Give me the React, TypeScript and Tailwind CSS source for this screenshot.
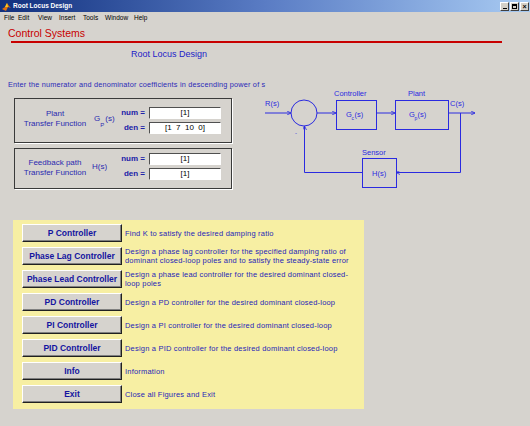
import React from "react";

const buttons: { label: string; desc: string[] }[] = [
  { label: "P Controller", desc: ["Find K to satisfy the desired damping ratio"] },
  {
    label: "Phase Lag Controller",
    desc: [
      "Design a phase lag controller for the specified damping ratio of",
      "dominant closed-loop poles and to satisfy the steady-state error",
    ],
  },
  {
    label: "Phase Lead Controller",
    desc: ["Design a phase lead controller for the desired dominant closed-", "loop poles"],
  },
  { label: "PD Controller", desc: ["Design a PD controller for the desired dominant closed-loop"] },
  { label: "PI Controller", desc: ["Design a PI controller for the desired dominant closed-loop"] },
  { label: "PID Controller", desc: ["Design a PID controller for the desired dominant closed-loop"] },
  { label: "Info", desc: ["Information"] },
  { label: "Exit", desc: ["Close all Figures and Exit"] },
];

const menu = [
  { name: "File", w: "w-[14px]" },
  { name: "Edit", w: "w-[20px]" },
  { name: "View", w: "w-[21px]" },
  { name: "Insert", w: "w-[24px]" },
  { name: "Tools", w: "w-[22px]" },
  { name: "Window", w: "w-[29px]" },
  { name: "Help", w: "w-[20px]" },
];

function CoefRow({ label, value }: { label: string; value: string }) {
  return (
    <div className="flex items-center h-[12px]">
      <span className="w-[27px] text-right text-[8px] font-bold text-[#2020a8] leading-none">{label}</span>
      <div className="ml-[4px] w-[72px] h-[12px] bg-white border border-t-[#505050] border-l-[#505050] border-b-white border-r-white flex items-center justify-center text-[8px] text-black leading-none whitespace-pre">
        {value}
      </div>
    </div>
  );
}

function Diagram() {
  const c = "#2a2ae0";
  return (
    <svg width="240" height="100" viewBox="0 0 240 100" className="ml-[18px] shrink-0">
      <defs>
        <marker id="ar" markerWidth="4" markerHeight="4" refX="4" refY="2" orient="auto">
          <path d="M0,0 L4,2 L0,4" fill="none" stroke={c} strokeWidth="0.8" />
        </marker>
      </defs>
      <g fill="none" stroke={c} strokeWidth="1">
        <line x1="15" y1="24" x2="41" y2="24" markerEnd="url(#ar)" />
        <circle cx="54" cy="24" r="13" />
        <line x1="67" y1="24" x2="86" y2="24" markerEnd="url(#ar)" />
        <rect x="86.5" y="11.5" width="40" height="29" />
        <line x1="126" y1="24" x2="145" y2="24" markerEnd="url(#ar)" />
        <rect x="145.5" y="11.5" width="53" height="29" />
        <line x1="198" y1="24" x2="225" y2="24" markerEnd="url(#ar)" />
        <polyline points="210.5,24 210.5,83.5 146,83.5" markerEnd="url(#ar)" />
        <rect x="112.5" y="69.5" width="34" height="29" />
        <polyline points="112,83.5 54.5,83.5 54.5,37" markerEnd="url(#ar)" />
      </g>
      <g fill={c} fontSize="7.5" fontFamily="'Liberation Sans', Arial, sans-serif">
        <text x="15" y="17">R(s)</text>
        <text x="84" y="7">Controller</text>
        <text x="96" y="28">G</text>
        <text x="101.5" y="31" fontSize="5">c</text>
        <text x="104.5" y="28">(s)</text>
        <text x="158" y="7">Plant</text>
        <text x="159" y="28">G</text>
        <text x="164.5" y="31" fontSize="5">p</text>
        <text x="167.5" y="28">(s)</text>
        <text x="200" y="17">C(s)</text>
        <text x="112" y="66">Sensor</text>
        <text x="122" y="87">H(s)</text>
        <text x="45" y="46" fontSize="6">-</text>
      </g>
    </svg>
  );
}

export default function App() {
  return (
    <div className="w-[530px] h-[426px] overflow-hidden bg-[#d6d3ce] font-['Liberation_Sans',Arial,sans-serif] flex flex-col">
      {/* title bar */}
      <div className="h-[12px] flex items-center bg-gradient-to-r from-[#12307e] via-[#5a7cc4] to-[#a9cbf2] shrink-0">
        <svg width="9" height="9" viewBox="0 0 9 9" className="ml-[2px]">
          <path d="M0,7 L3,5 L5,1 L7,4 L9,6 L6,5 L4,9 Z" fill="#e07010" />
          <path d="M3,5 L5,1 L6,5 Z" fill="#f8d020" />
        </svg>
        <span className="ml-[2px] text-[6.5px] font-bold text-white leading-none">Root Locus Design</span>
        <div className="ml-auto mr-[1px] flex gap-[1px]">
          <div className="w-[9px] h-[9px] bg-[#d4d0c8] border border-t-white border-l-white border-b-[#404040] border-r-[#404040] flex items-end justify-center pb-[1px]">
            <div className="w-[4px] h-[1px] bg-black" />
          </div>
          <div className="w-[9px] h-[9px] bg-[#d4d0c8] border border-t-white border-l-white border-b-[#404040] border-r-[#404040] flex items-center justify-center">
            <div className="w-[5px] h-[5px] border border-black border-t-2" />
          </div>
          <div className="w-[9px] h-[9px] bg-[#d4d0c8] border border-t-white border-l-white border-b-[#404040] border-r-[#404040] flex items-center justify-center text-[7px] font-bold leading-none text-black">
            ×
          </div>
        </div>
      </div>
      {/* menu */}
      <div className="h-[12px] flex items-center pl-[4px] shrink-0">
        {menu.map((m) => (
          <span key={m.name} className={`${m.w} text-[6.5px] text-black leading-none`}>
            {m.name}
          </span>
        ))}
      </div>

      <div className="mt-[3px] ml-[8px] h-[12px] leading-[12px] text-[10.5px] text-[#c80000]">Control Systems</div>
      <div className="mt-[2px] ml-[11px] w-[491px] h-[2px] bg-[#c80000]" />
      <div className="mt-[6px] ml-[131px] h-[10px] leading-[10px] text-[9px] text-[#1c1cc8]">Root Locus Design</div>
      <div className="mt-[21px] ml-[8px] h-[9px] leading-[9px] text-[7.3px] tracking-[0.2px] text-[#2a2ab8] whitespace-nowrap">
        Enter the numerator and denominator coefficients in descending power of s
      </div>

      <div className="flex items-start">
        <div className="ml-[14px] pt-[9px] w-[218px] flex flex-col gap-[5px]">
          <div className="h-[45px] border border-[#3a3a3a] shadow-[1px_1px_0_#ffffff] flex items-start">
            <div className="mt-[10px] ml-[3px] w-[74px] text-center text-[8px] leading-[10px] text-[#2a2ab0]">
              <div>Plant</div>
              <div>Transfer Function</div>
            </div>
            <div className="mt-[16px] ml-[2px] flex items-start text-[8px] leading-none text-[#2a2ab0] whitespace-nowrap">
              <span>G</span>
              <span className="w-[5px] pt-[7px] text-[6px] leading-none">P</span>
              <span>(s)</span>
            </div>
            <div className="ml-auto mr-[10px] mt-[8px] flex flex-col gap-[3px]">
              <CoefRow label="num =" value="[1]" />
              <CoefRow label="den =" value="[1  7  10  0]" />
            </div>
          </div>
          <div className="h-[41px] border border-[#3a3a3a] shadow-[1px_1px_0_#ffffff] flex items-start">
            <div className="mt-[9px] ml-[3px] w-[74px] text-center text-[8px] leading-[10px] text-[#2a2ab0]">
              <div>Feedback path</div>
              <div>Transfer Function</div>
            </div>
            <div className="mt-[14px] text-[8px] leading-none text-[#2a2ab0]">H(s)</div>
            <div className="ml-auto mr-[10px] mt-[4px] flex flex-col gap-[3px]">
              <CoefRow label="num =" value="[1]" />
              <CoefRow label="den =" value="[1]" />
            </div>
          </div>
        </div>
        <Diagram />
      </div>

      <div className="mt-[31px] ml-[13px] w-[351px] h-[189px] bg-[#f7efa3] pt-[4px] pl-[9px] flex flex-col gap-[5px]">
        {buttons.map((b) => (
          <div key={b.label} className="flex items-center h-[18px]">
            <div className="w-[100px] h-[18px] shrink-0 bg-[#d6d3ce] border border-t-white border-l-white border-b-[#202020] border-r-[#202020] shadow-[inset_-1px_-1px_0_#808080] flex items-center justify-center text-[8.5px] font-bold text-[#1414a0] leading-none whitespace-nowrap">
              {b.label}
            </div>
            <div className="ml-[3px] text-[7.5px] tracking-[0.2px] leading-[9px] text-[#2626b8] whitespace-nowrap">
              {b.desc.map((d) => (
                <div key={d}>{d}</div>
              ))}
            </div>
          </div>
        ))}
      </div>
    </div>
  );
}
